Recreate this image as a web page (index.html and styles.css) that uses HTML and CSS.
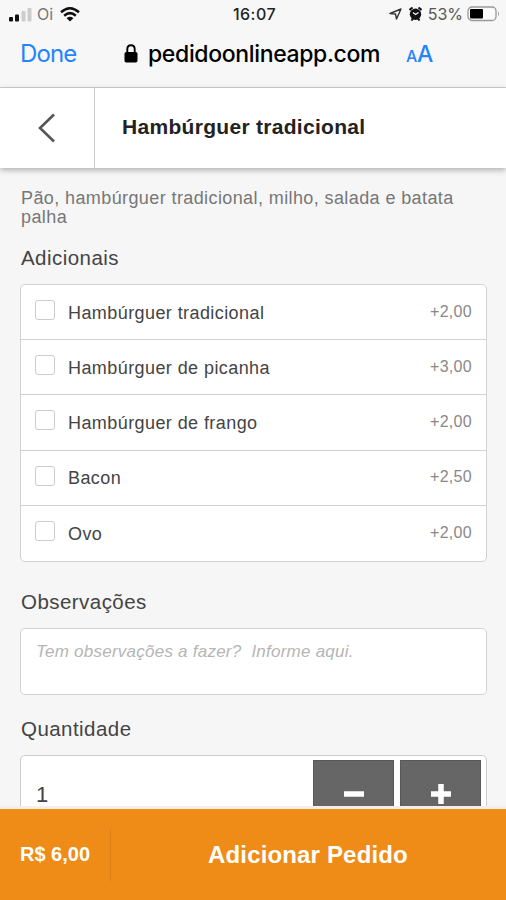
FILE: index.html
```
<!DOCTYPE html>
<html lang="pt-BR">
<head>
    <meta charset="UTF-8" />
    <meta name="viewport" content="width=device-width, initial-scale=1.0" />
    <title>Hambúrguer tradicional</title>
    <link rel="stylesheet" href="styles.css">
</head>
<body>
    <div class="browser">
        <div class="status">
            <div class="status-left">
                <svg class="signal" width="24" height="15" viewBox="0 0 24 15">
                    <rect x="0" y="10" width="4" height="4.500" rx="1" fill="#111" />
                    <rect x="6" y="7.500" width="4" height="7" rx="1" fill="#111" />
                    <rect x="12.500" y="4" width="4" height="10.500" rx="1" fill="#ccc" />
                    <rect x="18.500" y="1" width="4" height="13.500" rx="1" fill="#ccc" />
                </svg>
                <span class="carrier">Oi</span>
                <svg class="wifi" width="20" height="15" viewBox="0 0 20 15" fill="none" stroke="#111" stroke-width="2.500">
                    <path d="M1 5.300Q10-2.700 19 5.300" />
                    <path d="M4.200 8.700Q10 3.600 15.800 8.700" />
                    <path d="M10 14.500L6.600 11.200Q10 8.300 13.400 11.200Z" fill="#111" stroke="none" />
                </svg>
            </div>
            <span class="time">16:07</span>
            <div class="status-right">
                <svg class="location" width="13" height="12" viewBox="0 0 13 12" fill="none" stroke="#333" stroke-width="1.400" stroke-linejoin="round">
                    <path d="M1 5.500L12 1L7.500 11L6.500 6Z" />
                </svg>
                <svg class="alarm" width="13" height="14" viewBox="0 0 13 14">
                    <path d="M.500 3L3.500.500M12.500 3L9.500.500M2.500 13.500L4 11.500M10.500 13.500L9 11.500" stroke="#111" stroke-width="2" />
                    <circle cx="6.500" cy="7.200" r="5.700" fill="#111" />
                    <path d="M4 5.500L6.500 7.500L9.500 5.500" fill="none" stroke="#f7f7f7" stroke-width="1.200" />
                </svg>
                <span class="percent">53%</span>
                <svg class="battery" width="33" height="16" viewBox="0 0 33 16">
                    <rect x="1" y="1" width="28" height="13.500" rx="4" fill="#fbfbfb" stroke="#999" stroke-width="1.300" />
                    <rect x="3" y="3" width="13" height="9.500" rx="1" fill="#000" />
                    <path d="M31 5.500Q33 7.800 31 10Z" fill="#999" />
                </svg>
            </div>
        </div>
        <div class="address">
            <span class="done">Done</span>
            <svg class="lock" width="14" height="19" viewBox="0 0 14 19">
                <path d="M3.300 9V5.300Q3.300 1.200 7 1.200T10.700 5.300V9" fill="none" stroke="#000" stroke-width="1.900" />
                <rect x=".500" y="8" width="13" height="10.500" rx="1.800" />
            </svg>
            <span class="url">pedidoonlineapp.com</span>
            <span class="text-size"><small>A</small>A</span>
        </div>
    </div>

    <header class="header">
        <button class="back">
            <svg width="18" height="30" viewBox="0 0 18 30">
                <path d="M16 1.500L2 15L16 28.500" fill="none" stroke="#555" stroke-width="2.600" />
            </svg>
        </button>
        <h1>Hambúrguer tradicional</h1>
    </header>

    <main>
        <p class="description">Pão, hambúrguer tradicional, milho, salada e batata palha</p>

        <h2>Adicionais</h2>
        <ul class="extras">
            <li><label><input type="checkbox"><span class="name">Hambúrguer tradicional</span></label><span class="price">+2,00</span></li>
            <li><label><input type="checkbox"><span class="name">Hambúrguer de picanha</span></label><span class="price">+3,00</span></li>
            <li><label><input type="checkbox"><span class="name">Hambúrguer de frango</span></label><span class="price">+2,00</span></li>
            <li><label><input type="checkbox"><span class="name">Bacon</span></label><span class="price">+2,50</span></li>
            <li><label><input type="checkbox"><span class="name">Ovo</span></label><span class="price">+2,00</span></li>
        </ul>

        <h2>Observações</h2>
        <textarea placeholder="Tem observações a fazer?  Informe aqui."></textarea>

        <h2>Quantidade</h2>
        <div class="quantity">
            <span class="value">1</span>
            <button><svg width="20" height="20" viewBox="0 0 20 20"><path d="M0 10H20" stroke="#fff" stroke-width="5.500" /></svg></button>
            <button><svg width="20" height="20" viewBox="0 0 20 20"><path d="M0 10H20M10 0V20" stroke="#fff" stroke-width="5.500" /></svg></button>
        </div>
    </main>

    <footer class="order">
        <span class="total">R$ 6,00</span>
        <span class="add">Adicionar Pedido</span>
    </footer>
</body>
</html>
```
FILE: styles.css
```
* {
    box-sizing: border-box;
}
body {
    font-family: "Liberation Sans", Arial, sans-serif;
    background: #f6f6f6;
    color: #444;
    display: flex;
    flex-direction: column;
    height: 900px;
    margin: 0;
    overflow: hidden;
}
button {
    border: none;
    padding: 0;
    display: flex;
    align-items: center;
    justify-content: center;
}
svg {
    display: block;
    flex: none;
}
.browser {
    font-family: Inter, Roboto, sans-serif;
    height: 88px;
    background: #f7f7f7;
    border-bottom: 1px solid #d2d2d2;
    flex: none;
}
.status {
    display: grid;
    grid-template-columns: 1fr auto 1fr;
    height: 28px;
    padding: 0 6px 0 9px;
    align-items: center;
    font-size: 16px;
    color: #222;
}
.status-left,
.status-right {
    display: flex;
    align-items: center;
}
.status-right {
    justify-content: flex-end;
}
.carrier {
    color: #777;
    margin: 0 7px 0 4px;
}
.time {
    font-weight: 500;
    letter-spacing: 0.5px;
}
.location {
    margin-right: 1px;
}
.alarm {
    margin: 0 6px;
}
.percent {
    color: #555;
    margin-right: 4px;
}
.address {
    display: flex;
    align-items: center;
    height: 51px;
    padding-left: 20px;
    color: #000;
}
.done {
    color: #2584fc;
    font-size: 24px;
    letter-spacing: -0.9px;
    width: 104px;
}
.url {
    font-size: 23px;
    font-weight: 500;
    letter-spacing: -0.35px;
    width: 258px;
    margin-left: 10px;
}
.text-size {
    color: #2584fc;
    font-size: 23px;
    font-weight: 500;
    letter-spacing: -0.4px;
}
.text-size small {
    font-size: 16px;
}
.header {
    display: flex;
    align-items: center;
    flex: none;
    height: 80px;
    background: #fff;
    box-shadow: 0 2px 6px rgba(0, 0, 0, 0.3);
    position: relative;
}
.back {
    width: 95px;
    height: 80px;
    background: #fff;
    border-right: 1px solid #ccc;
}
h1 {
    margin: -2px 0 0 27px;
    font-size: 21px;
    letter-spacing: 0.3px;
    color: #222;
}
main {
    height: 638px;
    flex: none;
    padding: 21px 19px 0 20px;
    overflow: hidden;
}
.description {
    margin: 0 0 19px 1px;
    font-size: 18px;
    line-height: 19px;
    letter-spacing: 0.4px;
    color: #777;
}
h2 {
    margin: 0 0 14px 1px;
    font-size: 20.5px;
    font-weight: normal;
    line-height: 24px;
    letter-spacing: 0.45px;
    color: #444;
}
.extras {
    list-style: none;
    margin: 0 0 28px;
    padding: 0;
    background: #fff;
    border: 1px solid #d2d2d2;
    border-radius: 5px;
}
.extras li {
    display: flex;
    align-items: center;
    justify-content: space-between;
    height: 55.2px;
    padding: 0 14px;
    border-bottom: 1.5px solid #d2d2d2;
}
.extras li:last-child {
    border-bottom: none;
}
.extras label {
    display: flex;
    align-items: center;
}
.extras input {
    appearance: none;
    width: 20px;
    height: 20px;
    margin: 0 13px 4px 0;
    border: 1.5px solid #ccc;
    border-radius: 3px;
}
.name {
    font-size: 18px;
    letter-spacing: 0.42px;
    padding-top: 2px;
}
.price {
    font-size: 16px;
    letter-spacing: 0.3px;
    padding-bottom: 1px;
    color: #888;
}
textarea {
    display: block;
    width: 100%;
    height: 67px;
    margin: 0 0 22px;
    padding: 13px 15px;
    border: 1px solid #d2d2d2;
    border-radius: 5px;
    background: #fff;
    font-family: inherit;
    font-size: 17px;
    letter-spacing: 0.24px;
    resize: none;
}
textarea::placeholder {
    color: #b5b5b5;
    font-style: italic;
}
.quantity {
    display: flex;
    gap: 6px;
    height: 80px;
    padding: 4px 5px;
    background: #fff;
    border: 1px solid #ccc;
    border-radius: 5px;
}
.value {
    flex: 1;
    align-self: flex-start;
    padding: 24px 0 0 10px;
    font-size: 22px;
    line-height: 22px;
}
.quantity button {
    width: 81px;
    height: 68px;
    background: #666;
    border: 1px solid #585858;
}
.order {
    display: flex;
    align-items: center;
    height: 94px;
    background: #ef8c18;
    border-top: 3px solid #f3efe8;
    color: #fff;
    font-weight: bold;
}
.total {
    width: 111px;
    height: 52px;
    padding-left: 20px;
    line-height: 50px;
    font-size: 20px;
    border-right: 1px solid #dd8013;
}
.add {
    margin-left: 97px;
    font-size: 24px;
    letter-spacing: 0.16px;
}
```
